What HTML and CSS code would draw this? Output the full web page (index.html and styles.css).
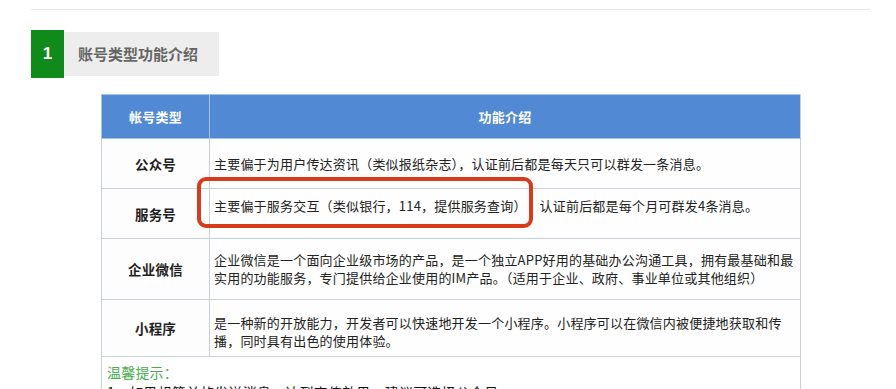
FILE: index.html
```html
<!DOCTYPE html>
<html lang="zh-CN">
<head>
<meta charset="utf-8">
<title>账号类型功能介绍</title>
<link rel="stylesheet" href="styles.css">
</head>
<body>
<div class="page">
  <div class="rule"></div>
  <div class="section-head">
    <div class="num">1</div>
    <div class="title">账号类型功能介绍</div>
  </div>
  <div class="table-wrap">
    <table class="types">
      <thead>
        <tr class="row-head">
          <th class="col-type">帐号类型</th>
          <th class="col-desc">功能介绍</th>
        </tr>
      </thead>
      <tbody>
        <tr class="row-a">
          <td class="label">公众号</td>
          <td class="desc">主要偏于为用户传达资讯（类似报纸杂志），认证前后都是每天只可以群发一条消息。</td>
        </tr>
        <tr class="row-a">
          <td class="label">服务号</td>
          <td class="desc desc-up">主要偏于服务交互（类似银行，114，提供服务查询）　&nbsp;&nbsp;认证前后都是每个月可群发4条消息。</td>
        </tr>
        <tr class="row-b">
          <td class="label">企业微信</td>
          <td class="desc"><span class="line">企业微信是一个面向企业级市场的产品，是一个独立APP好用的基础办公沟通工具，拥有最基础和最</span><br><span class="line">实用的功能服务，专门提供给企业使用的IM产品。（适用于企业、政府、事业单位或其他组织）</span></td>
        </tr>
        <tr class="row-c">
          <td class="label">小程序</td>
          <td class="desc desc-down"><span class="line">是一种新的开放能力，开发者可以快速地开发一个小程序。小程序可以在微信内被便捷地获取和传</span><br><span class="line">播，同时具有出色的使用体验。</span></td>
        </tr>
        <tr class="row-tip">
          <td class="tip" colspan="2">
            <div class="tip-title">温馨提示：</div>
            <div class="tip-line">1、如果想简单的发送消息，达到宣传效果，建议可选择公众号</div>
          </td>
        </tr>
      </tbody>
    </table>
    <div class="highlight"></div>
  </div>
</div>
</body>
</html>
```

FILE: styles.css
```css
html, body {
  margin: 0;
  padding: 0;
  background: #ffffff;
  overflow: hidden;
}

body {
  font-family: "Noto Sans CJK SC", "Microsoft YaHei", sans-serif;
  color: #222;
}

.page {
  padding-left: 31px;
  padding-top: 9px;
}

.rule {
  width: 839px;
  height: 1px;
  background: #e6e6e6;
}

.section-head {
  display: flex;
  align-items: center;
  margin-top: 20px;
  height: 48px;
}

.num {
  width: 33px;
  height: 48px;
  background: #108a1b;
  color: #fff;
  font-family: "Liberation Sans", Arial, sans-serif;
  font-weight: bold;
  font-size: 17px;
  display: flex;
  align-items: center;
  justify-content: center;
}

.title {
  width: 141px;
  height: 44px;
  background: #ededed;
  color: #666;
  font-weight: bold;
  font-size: 15px;
  line-height: 44px;
  padding-left: 14px;
}

.table-wrap {
  position: relative;
  margin-top: 16px;
  margin-left: 70px;
  width: 700px;
}

.types {
  border-collapse: collapse;
  width: 700px;
  table-layout: fixed;
  font-size: 13px;
  letter-spacing: 0.2px;
}

.types th,
.types td {
  border: 1px solid #c9d0da;
  padding: 0;
}

.col-type {
  width: 107px;
}

.row-head th {
  height: 43px;
  background: #5189d5;
  color: #fff;
  font-weight: bold;
  text-align: center;
  border-color: #a9c1e3;
}

.row-head .col-desc {
  border-right-color: #c9d0da;
}

.label {
  text-align: center;
  font-weight: bold;
  font-size: 13.5px;
  color: #1f1f1f;
  background: #fdfdfd;
}

.desc {
  padding: 0 6px 0 4px !important;
  color: #222;
  line-height: 18px;
  background: #fefefe;
  vertical-align: middle;
}

.row-a .desc-up {
  height: auto;
  vertical-align: top;
  padding-top: 8px !important;
}

.row-c .desc-down {
  height: auto;
  vertical-align: top;
  padding-top: 14px !important;
}

.line {
  white-space: nowrap;
}

.row-a td {
  height: 49px;
}

.row-b td {
  height: 60px;
}

.row-c td {
  height: 56px;
}

.row-tip td {
  height: 60px;
  vertical-align: top;
  padding: 5px 0 0 5px;
  border-bottom: none;
}

.tip-title {
  color: #49ad4e;
  font-size: 14px;
  line-height: 20px;
}

.tip-line {
  color: #111;
  font-size: 14px;
  line-height: 20px;
}

.highlight {
  position: absolute;
  left: 96px;
  top: 83px;
  width: 328px;
  height: 43px;
  border: 4px solid #d63c1c;
  border-radius: 9px;
  pointer-events: none;
}
```
